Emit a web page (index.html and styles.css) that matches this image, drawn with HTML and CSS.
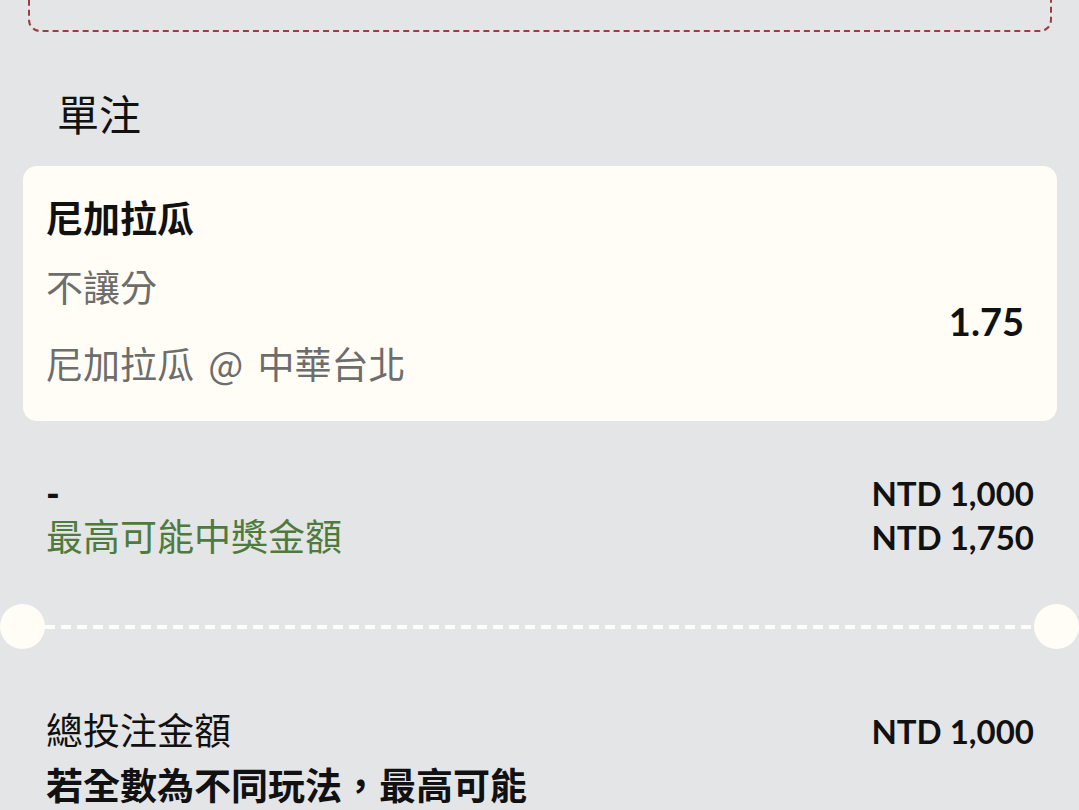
FILE: index.html
```html
<!DOCTYPE html>
<html lang="zh-Hant">
<head>
    <meta charset="UTF-8">
    <meta name="viewport" content="width=device-width, initial-scale=1.0">
    <title>投注單</title>
    <link rel="stylesheet" href="styles.css">
</head>
<body>
    <div class="slip">
        <div class="slip-note"></div>

        <h2 class="section-title">單注</h2>

        <div class="bet-card">
            <div class="bet-team">尼加拉瓜</div>
            <div class="bet-market">不讓分</div>
            <div class="bet-match">尼加拉瓜 @ 中華台北</div>
            <div class="bet-odds">1.75</div>
        </div>

        <div class="amounts">
            <div class="amount-row">
                <span class="amount-label dash">-</span>
                <span class="amount-value">NTD 1,000</span>
            </div>
            <div class="amount-row">
                <span class="amount-label win">最高可能中獎金額</span>
                <span class="amount-value">NTD 1,750</span>
            </div>
        </div>

        <div class="ticket-divider">
            <span class="notch"></span>
            <span class="dash-line"></span>
            <span class="notch"></span>
        </div>

        <div class="totals">
            <div class="amount-row">
                <span class="amount-label">總投注金額</span>
                <span class="amount-value">NTD 1,000</span>
            </div>
            <div class="amount-row bottom">
                <span class="amount-label strong">若全數為不同玩法，最高可能中獎金額</span>
                <span class="amount-value">NTD 1,750</span>
            </div>
        </div>
    </div>
</body>
</html>
```

FILE: styles.css
```css
* {
    margin: 0;
    padding: 0;
    box-sizing: border-box;
}

html, body {
    height: 100%;
    overflow: hidden;
}

body {
    font-family: Lato, "Noto Sans CJK TC", sans-serif;
    background: #e4e5e7;
    color: #111;
}

.slip-note {
    margin: -80px 27px 0 28px;
    height: 112px;
    border: 2px dashed #9e3d3d;
    border-radius: 12px;
}

.section-title {
    font-size: 42px;
    font-weight: 400;
    line-height: 56px;
    padding: 55px 0 0 57px;
}

.bet-card {
    margin: 23px 22px 0 23px;
    background: #fffdf6;
    border-radius: 14px;
    padding: 27px 33px 32px 23px;
    display: grid;
    grid-template-columns: 1fr auto;
    font-size: 37px;
    line-height: 52px;
}

.bet-team {
    font-weight: 700;
    grid-column: 1;
}

.bet-market,
.bet-match {
    grid-column: 1;
    color: #6d6d6b;
    font-family: "Noto Sans CJK TC", sans-serif;
}

.bet-market {
    margin-top: 15px;
}

.bet-match {
    margin-top: 25px;
    word-spacing: 6px;
}

.bet-odds {
    grid-column: 2;
    grid-row: 2 / 4;
    align-self: center;
    font-weight: 700;
    font-size: 38px;
    padding-top: 8px;
}

.amounts {
    padding: 50px 45px 0 46px;
}

.amount-row {
    display: flex;
    justify-content: space-between;
    align-items: flex-start;
    font-size: 37px;
    line-height: 44px;
}

.amount-row.bottom {
    align-items: flex-end;
}

.amount-label {
    max-width: 490px;
}

.amount-label.dash {
    font-weight: 900;
}

.amount-label.win {
    color: #4e7b3c;
}

.amount-label.strong {
    font-weight: 700;
}

.amount-value {
    font-size: 33px;
    font-weight: 700;
}

.ticket-divider {
    display: flex;
    align-items: center;
    margin-top: 45px;
    height: 45px;
}

.notch {
    width: 45px;
    height: 45px;
    border-radius: 50%;
    background: #fffdf6;
}

.dash-line {
    flex: 1;
    height: 4px;
    background: repeating-linear-gradient(90deg, #fdfcf7 0 10px, transparent 10px 16px);
}

.totals {
    padding: 60px 45px 0 46px;
}

.totals .amount-row + .amount-row {
    margin-top: 11px;
}
```
